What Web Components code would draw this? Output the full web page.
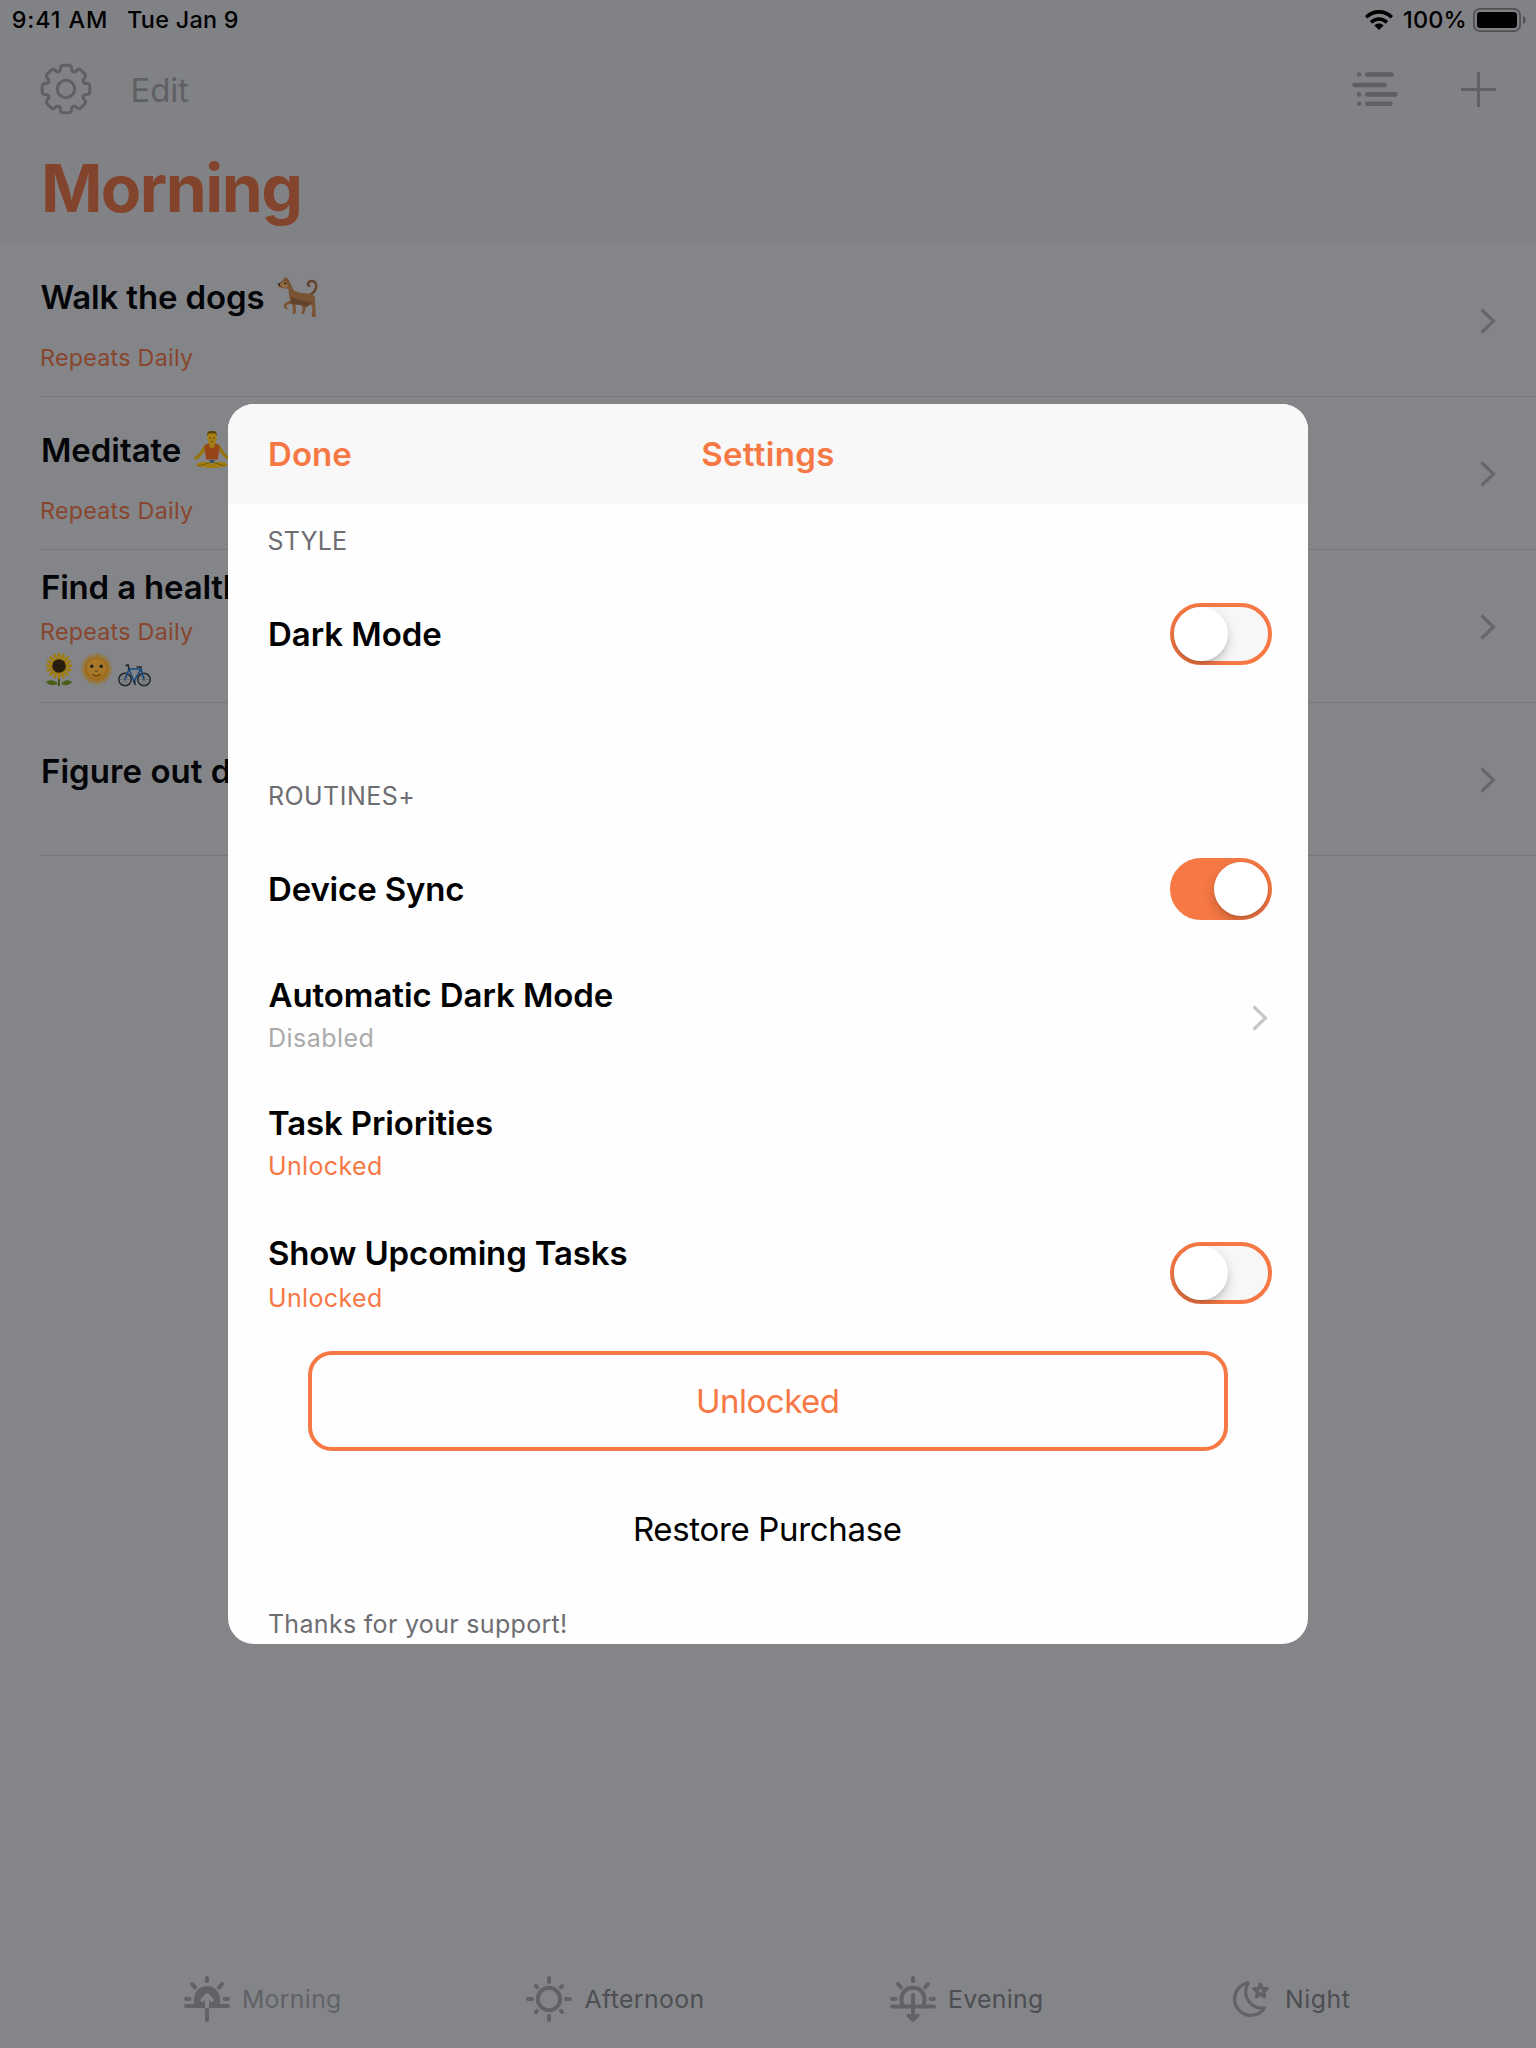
<!DOCTYPE html>
<html lang="en">
<head>
<meta charset="utf-8">
<title>Routines</title>
<style>
html,body{margin:0;padding:0}
body{width:1536px;height:2048px;overflow:hidden;font-family:Inter,"Liberation Sans",sans-serif;
--accent:#f67844;--accent-dim:#83442d;--muted:#5f6064;background:#848589}
</style>
</head>
<body>
<routines-app></routines-app>
<script>
/* Registers an element whose shadow root is cloned from a template string. */
const define=(name,html,setup)=>{
  const t=document.createElement('template');t.innerHTML=html;
  customElements.define(name,class extends HTMLElement{
    connectedCallback(){
      if(this.shadowRoot)return;
      this.attachShadow({mode:'open'}).append(t.content.cloneNode(true));
      if(setup)setup(this,this.shadowRoot);
    }
  });
};
const ctx=document.createElement('canvas').getContext('2d');

define('fit-text',`<style>:host{display:block;flex:none;white-space:nowrap}span{display:block}</style><span></span>`,(el,root)=>{
  const s=root.querySelector('span'),text=el.getAttribute('text');
  const size=+el.getAttribute('size'),weight=el.getAttribute('weight')||400,w=+el.getAttribute('w');
  s.textContent=text;
  ctx.font=`${weight} ${size*10}px Inter, "Liberation Sans", sans-serif`;
  const m=ctx.measureText(text);
  const left=m.actualBoundingBoxLeft/10,ink=left+m.actualBoundingBoxRight/10;
  const nudge=/^[DMRFUE]/.test(text)?1:/^W/.test(text)?-1:0;
  const track=(w-ink-nudge-.6)/(text.length-1);
  s.style.cssText=`font-size:${size}px;font-weight:${weight};line-height:${el.getAttribute('lh')||40}px;letter-spacing:${track.toFixed(3)}px;margin-left:${(left+nudge).toFixed(2)}px`;
  el.style.width=w+'px';
  if(el.hasAttribute('color'))el.style.color=el.getAttribute('color');
});

/* Gear outline: eight teeth with rounded corners. */
const gearPath=()=>{
  const p=[];
  for(let i=0;i<8;i++)for(const [r,d] of [[18.8,-16.5],[24.5,-13],[24.5,13],[18.8,16.5]]){
    const a=(i*45+d-90)*Math.PI/180;p.push([26+r*Math.cos(a),26+r*Math.sin(a)]);
  }
  const n=p.length,cut=(a,b,k)=>{const l=Math.hypot(b[0]-a[0],b[1]-a[1]),f=Math.min(k/l,.5);return[a[0]+(b[0]-a[0])*f,a[1]+(b[1]-a[1])*f].map(v=>v.toFixed(2)).join(' ')};
  return p.map((c,i)=>`${i?'L':'M'}${cut(c,p[(i+n-1)%n],3.4)}Q${c.map(v=>v.toFixed(2)).join(' ')} ${cut(c,p[(i+1)%n],3.4)}`).join('')+'Z';
};
const rays='<path d="M23 2v3M8 8l3 3.5M38 8l-3 3.5M2 23h3.5M40.5 23H44"/>';
const icons={
 gear:[52,52,`<g fill="none" stroke="currentColor" stroke-width="3"><path d="${gearPath()}"/><circle cx="26" cy="26" r="8.7"/></g>`],
 list:[46,36,`<g stroke="currentColor" stroke-width="4.6" stroke-linecap="round"><path d="M15.3 3.5H39.5M2.5 14H32.5M15.3 23.4H43.5M15.3 32.8H38.5M7 3.5h.01M7 23.4h.01M7 32.8h.01"/></g>`],
 plus:[35,35,`<path d="M17.5 0v35M0 17.5h35" stroke="currentColor" stroke-width="3"/>`],
 chevron:[16,26,`<path d="M1.5 1.5L13.5 13L1.5 24.5" fill="none" stroke="currentColor" stroke-width="3.2"/>`],
 wifi:[28,20,`<g fill="none" stroke="#000" stroke-width="3.6"><path d="M1.2 7.2C8.5 .1 19.5 .1 26.8 7.2"/><path d="M6 12.4c4.8-4.6 11.2-4.6 16 0"/></g><path d="M9.4 15.4c2.8-2.4 6.4-2.4 9.2 0L14 20z"/>`],
 battery:[54,24,`<rect x=".9" y=".9" width="46.2" height="22.2" rx="6.2" fill="none" stroke="#505154" stroke-width="1.8"/><rect x="4" y="4" width="40" height="16" rx="3"/><path d="M50 8c3.6 1.6 3.6 6.4 0 8z" fill="#505154"/>`],
 morning:[46,46,`<g fill="none" stroke="currentColor" stroke-width="4" stroke-linecap="round">${rays}<path d="M2 30h42M23 32v12"/></g><path d="M10 30v-7a13 13 0 0 1 26 0v7z" fill="currentColor"/><g fill="none" stroke="#848589" stroke-width="4"><path d="M23 20v12.3"/><path d="M18.3 24l4.7-5 4.7 5" stroke-linecap="round" stroke-linejoin="round"/></g>`],
 afternoon:[46,46,`<g fill="none" stroke="currentColor" stroke-width="4" stroke-linecap="round"><circle cx="23" cy="23" r="11.2"/><path d="M23 2v4M23 40v4M2 23h4M40 23h4M10 10l1 1.2M36 10l-1 1.2M10 36l1-1.2M36 36l-1-1.2"/></g>`],
 evening:[46,46,`<g fill="none" stroke="currentColor" stroke-width="4" stroke-linecap="round" stroke-linejoin="round">${rays}<path d="M12.8 30C9 20 14 11.7 23 11.7S37 20 33.2 30M2 30.5h42M23 19v24M18.5 39.5L23 43.8l4.500-4.300"/></g>`],
 night:[37,36,`<g fill="none" stroke="currentColor" stroke-width="3.2" stroke-linejoin="round"><path d="M15 1.9C6 3.500 1.600 11 1.600 18C1.600 27 9 34.300 18 34.300C24 34.300 29 31 31.500 26.800C20 28.500 7.500 17 15 1.900Z"/><path stroke-width="3.400" d="M27.500 3.200l1.800 4.200 4.700.4-3.600 3.100 1.100 4.600-4-2.500-4 2.500 1.100-4.600-3.600-3.100 4.700-.4z"/></g>`],
 dog:[42,42,`<g fill="#795434"><path d="M26 22c5 0 6-2 9-4.500 5.500-4 6-12-.5-12.500-3.500 0-4.600 3.600-2.300 4.800" fill="none" stroke="#65462c" stroke-width="2.500" stroke-linecap="round"/><path d="M1 8.500l5-4.500 2.500-3.500 2.500 4c2.600 1.300 3 4.500 4.500 7.500 2 4.500 7 5 17 5.500 3.500.5 6 2.500 5.500 6.500l.8 17h-3.800l-.2-3 .7-7-4-5-3 .5.5 5-2 6.500h-3l1.500-3-.5-6-6.500-1 .5 6-.5 4h-3l.5-3-1-8-6 2.500 2 3.500H8l-1.500-4.500 7-4.500c-1.500-3-2-7-2-11l-6-1-4-1z"/></g><path d="M14 20c5 5 14 4 21 7l-5 4-7-2-9-1z" fill="#63432a"/><path d="M3 8.500l5-3.500 3 6-4 1z" fill="#94704a"/><circle cx="8" cy="7.500" r=".9" fill="#201711"/><path d="M.6 7.500l2.400-.3L2.800 10z" fill="#201711"/><path d="M10 1.500L11 6l1-1z" fill="#653d31"/>`],
 yoga:[38,38,`<path d="M13 15c-4 4-4 9-10 12M25 15c4 4 4 9 10 12" stroke="#96740e" stroke-width="3.200" fill="none" stroke-linecap="round"/><path d="M3 34c3-4 10-4 16-1 6-3 13-3 16 1-4 4-28 4-32 0z" fill="#a17d12"/><path d="M5 35l14-4 13 4" fill="none" stroke="#735808" stroke-width="1"/><path d="M11.500 15c2-2 4-3 7.500-3s5.500 1 7.500 3l-.8 7-1 6.500H13.300L12 22z" fill="#984419"/><path d="M15.500 11h7l-1 4.500c-1 2-4 2-5 0z" fill="#a17d12"/><ellipse cx="19" cy="6.500" rx="4.800" ry="6.500" fill="#a68114"/><path d="M14.200 5C14 1 15 0 19 0s5 1 4.800 5l-1.600-2.400h-6.400z" fill="#5f4508"/><path d="M16 7h2M20 7h2M18 10.500h2" stroke="#5f4508" stroke-width="1"/><path d="M16 29h6l-2 2.500h-2z" fill="#28516a"/>`],
 sunflower:[28,33,`<path d="M14 22v11" stroke="#3f5511" stroke-width="2"/><path d="M1 29c4-3 9-2 12 2-4 2-9 1.500-12-2zM27 29c-4-3-8-2-11 2 4 2 8 1.500 11-2z" fill="#485e17"/><g stroke="#a07c0e" stroke-width="2.800" stroke-linecap="round"><path d="M14 1v24M2 13h24M5.500 4.500l17 17M22.500 4.500l-17 17M9.500 2l9 22M18.500 2l-9 22M3 8.500l22 9M25 8.500l-22 9"/></g><circle cx="14" cy="13" r="6.800" fill="#281d0e"/>`],
 sunface:[31,32,`<g stroke="#9d7420" stroke-width="1.400"><path d="M15.500 0v32M0 16h31M4.500 5l22 22M26.500 5l-22 22M9.500 1.500l12 29M21.500 1.500l-12 29M1.500 10l28 12M29.500 10l-28 12M12.500.8l6 30.400M18.500.8l-6 30.400M.8 13l29.400 6M30.200 13L.8 19M7 3l17 26M24 3L7 29M3 7.500l25 17M28 7.500l-25 17"/></g><circle cx="15.500" cy="16" r="12.300" fill="#9d6d20"/><circle cx="15.500" cy="15" r="9.500" fill="#a77828"/><circle cx="10.800" cy="13.300" r="1.700" fill="#25221e"/><circle cx="20.200" cy="13.300" r="1.700" fill="#25221e"/><path d="M11.500 21q4 4 8 0M14 18.200h3" stroke="#71480f" stroke-width="1.300" fill="none"/>`],
 bike:[33,23,`<g fill="none"><g stroke="#24272a" stroke-width="1.500"><circle cx="7" cy="15.500" r="6.200"/><circle cx="26" cy="15.500" r="6.200"/></g><g stroke="#515457" stroke-width=".5"><path d="M7 9v13M1 15.500h12M3 11l8 9M11 11l-8 9M26 9v13M20 15.500h12M22 11l8 9M30 11l-8 9"/></g><path d="M7 15.500l4-10.500h12l-7 12.500L11 5M23 5l3 10.500" stroke="#174a7c" stroke-width="1.600"/><path d="M7.500 1.500l2.500-.5 1 4M18.500 3h5.500M16 17.500l1.500 3.500M15.500 17.500h2" stroke="#202326" stroke-width="1.600"/></g>`]
};
define('ui-icon',`<style>:host{display:block;flex:none}svg{display:block;overflow:visible}</style>`,(el,root)=>{
  const [w,h,g]=icons[el.getAttribute('name')];
  const box=document.createElement('div');
  box.innerHTML=`<svg width="${w}" height="${h}" viewBox="0 0 ${w} ${h}">${g}</svg>`;
  root.append(box);
});

define('ui-switch',`<style>
:host{display:block;flex:none;box-sizing:border-box;width:102px;height:62px;border-radius:31px;border:4px solid var(--accent);background:#f7f7f7;position:relative}
:host([on]){background:var(--accent)}
.clip{position:absolute;inset:-4px;border-radius:31px;overflow:hidden;display:flex;padding:4px}
i{display:block;width:54px;height:54px;border-radius:50%;background:#fff;box-shadow:0 5px 12px rgba(0,0,0,.2),0 3px 2px rgba(0,0,0,.06)}
:host([on]) .clip{justify-content:flex-end}
</style><div class="clip"><i></i></div>`);

define('status-bar',`<style>:host{display:flex;align-items:center;height:39px;padding:0 9px 0 13px;color:#000}
fit-text+fit-text{margin-left:22px}.sp{flex:1}.pct{margin:0 8px 0 11px}</style>
<fit-text text="9:41 AM" size="23.4" weight="500" w="93" lh="39"></fit-text>
<fit-text text="Tue Jan 9" size="23.4" weight="500" w="110" lh="39"></fit-text>
<span class="sp"></span><ui-icon name="wifi"></ui-icon>
<fit-text class="pct" text="100%" size="23.4" weight="500" w="61" lh="39"></fit-text><ui-icon name="battery"></ui-icon>`);

define('nav-bar',`<style>:host{display:block;height:205px;color:var(--muted)}
.bar{display:flex;align-items:center;height:100px;padding:0 40px}
.edit{margin:2px 0 0 40px}.sp{flex:1}.plus{margin-left:63px}
.title{margin-left:44px;color:var(--accent-dim)}</style>
<div class="bar"><ui-icon name="gear"></ui-icon><fit-text class="edit" text="Edit" size="33" w="57"></fit-text>
<span class="sp"></span><ui-icon name="list"></ui-icon><ui-icon class="plus" name="plus"></ui-icon></div>
<fit-text class="title" text="Morning" size="66" weight="700" w="256" lh="98"></fit-text>`);

define('task-row',`<style>:host{display:flex;align-items:center;box-sizing:border-box;height:153px;margin-left:40px;padding-right:40px;border-bottom:1px solid #76777b;color:#66676b}
.main{flex:1;align-self:stretch;display:flex;flex-direction:column}.go{margin-top:2px}</style>
<div class="main"><slot></slot></div><ui-icon class="go" name="chevron"></ui-icon>`);

define('task-list',`<style>:host{display:block}
.t{display:flex;align-items:center;height:40px;color:#040508;margin-left:2px}
.r{color:#87462d;margin-left:1px}
.dog{margin-left:13px}.yoga{margin-left:12px}
.em{display:flex;align-items:flex-end;margin:1px 0 0 5px}
</style>
<task-row><div class="t" style="margin-top:33px"><fit-text text="Walk the dogs" size="33" weight="600" w="222"></fit-text><ui-icon class="dog" name="dog"></ui-icon></div>
<fit-text class="r" style="margin-top:21px" text="Repeats Daily" size="23.3" w="152"></fit-text></task-row>
<task-row><div class="t" style="margin-top:33px"><fit-text text="Meditate" size="33" weight="600" w="139"></fit-text><ui-icon class="yoga" name="yoga"></ui-icon></div>
<fit-text class="r" style="margin-top:21px" text="Repeats Daily" size="23.3" w="152"></fit-text></task-row>
<task-row><div class="t" style="margin-top:17px"><fit-text text="Find a healthy" size="33" weight="600" w="220"></fit-text></div>
<fit-text class="r" style="margin-top:5px" text="Repeats Daily" size="23.3" w="152"></fit-text>
<div class="em"><ui-icon name="sunflower"></ui-icon><ui-icon style="margin:0 6px 1px 8px" name="sunface"></ui-icon><ui-icon style="margin-bottom:-1px" name="bike"></ui-icon></div></task-row>
<task-row><div class="t" style="margin-top:48px"><fit-text text="Figure out d" size="33" weight="600" w="188"></fit-text></div></task-row>`);

define('tab-item',`<style>:host{display:flex;align-items:center;color:#616266}fit-text{color:#4d4e51}:host([active]) fit-text{color:#616266}</style>`,(el,root)=>{
  root.innerHTML+=`<ui-icon name="${el.getAttribute('icon')}"></ui-icon><fit-text style="margin-left:${el.getAttribute('gap')}px" text="${el.getAttribute('label')}" size="24.8" w="${el.getAttribute('w')}"></fit-text>`;
});
define('tab-bar',`<style>:host{display:flex;align-items:center;height:98px;padding-left:184px}</style>
<tab-item active icon="morning" label="Morning" gap="13" w="97"></tab-item>
<tab-item style="margin-left:186px" icon="afternoon" label="Afternoon" gap="13" w="118"></tab-item>
<tab-item style="margin-left:187px" icon="evening" label="Evening" gap="13" w="93"></tab-item>
<tab-item style="margin-left:191px" icon="night" label="Night" gap="17" w="63"></tab-item>`);

define('setting-row',`<style>:host{display:flex;align-items:center;justify-content:space-between;height:112px}:host([tall]){height:128px}
.l{display:flex;flex-direction:column;color:#000}:host([tall]) .l{padding-bottom:5px;gap:1px}:host([last]){height:126px}:host([last]) .l{padding:2px 0 0;gap:3px}</style>
<div class="l"><slot></slot></div><slot name="end"></slot>`);

define('settings-sheet',`<style>
:host{display:flex;flex-direction:column;width:1080px;height:1240px;border-radius:26px;background:#fefefe;overflow:hidden;color:var(--accent)}
header{display:grid;grid-template-columns:1fr auto 1fr;align-items:center;height:100px;flex:none;padding:0 41px;background:#f8f8f8}
main{padding:0 36px 0 41px}
.sec{color:#6d6d72}.second{margin-top:69px}
.pro{margin-bottom:9px}
button{all:unset;box-sizing:border-box;display:flex;align-items:center;justify-content:center;width:920px;height:100px;margin:15px 0 0 39px;border:4px solid var(--accent);border-radius:24px}
.restore{display:flex;justify-content:center;margin-top:28px;padding-right:5px;color:#000}
.thanks{margin-top:15px;color:#6d6d72}
ui-icon{margin-right:4px;color:#c7c7cb}
</style>
<header><fit-text text="Done" size="33" weight="600" w="82.5"></fit-text><fit-text text="Settings" size="33" weight="600" w="131.5"></fit-text></header>
<main>
<fit-text class="sec" text="STYLE" size="25" w="77" lh="74"></fit-text>
<setting-row><fit-text text="Dark Mode" size="33" weight="600" w="172.5"></fit-text><ui-switch slot="end"></ui-switch></setting-row>
<fit-text class="sec second" text="ROUTINES+" size="25" w="144" lh="74"></fit-text>
<setting-row class="pro"><fit-text text="Device Sync" size="33" weight="600" w="195"></fit-text><ui-switch on slot="end"></ui-switch></setting-row>
<setting-row tall><fit-text text="Automatic Dark Mode" size="33" weight="600" w="344" lh="44"></fit-text><fit-text text="Disabled" size="25" w="103.5" color="#aaaaaa"></fit-text><ui-icon slot="end" name="chevron"></ui-icon></setting-row>
<setting-row tall><fit-text text="Task Priorities" size="33" weight="600" w="223.5" lh="44"></fit-text><fit-text text="Unlocked" size="25" w="112" color="#f67844"></fit-text></setting-row>
<setting-row tall last><fit-text text="Show Upcoming Tasks" size="33" weight="600" w="358" lh="44"></fit-text><fit-text text="Unlocked" size="25" w="112" color="#f67844"></fit-text><ui-switch slot="end"></ui-switch></setting-row>
<button><fit-text text="Unlocked" size="33" w="141"></fit-text></button>
<div class="restore"><fit-text text="Restore Purchase" size="33" w="267" lh="100"></fit-text></div>
<fit-text class="thanks" text="Thanks for your support!" size="25" w="297" lh="60"></fit-text>
</main>`);

define('routines-app',`<style>
:host{display:flex;flex-direction:column;position:relative;width:1536px;height:2048px;background:#848589}
.top{background:#818285}.list{flex:1}
.overlay{position:absolute;inset:0;display:flex;align-items:center;justify-content:center}
</style>
<div class="top"><status-bar></status-bar><nav-bar></nav-bar></div>
<task-list class="list"></task-list>
<tab-bar></tab-bar>
<div class="overlay"><settings-sheet></settings-sheet></div>`);
</script>
</body>
</html>
